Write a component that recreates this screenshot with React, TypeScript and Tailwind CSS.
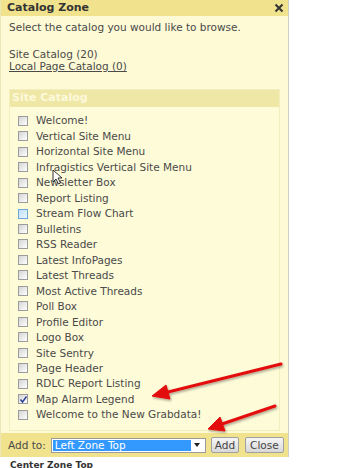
import React from "react";

const items = [
  "Welcome!",
  "Vertical Site Menu",
  "Horizontal Site Menu",
  "Infragistics Vertical Site Menu",
  "Newsletter Box",
  "Report Listing",
  "Stream Flow Chart",
  "Bulletins",
  "RSS Reader",
  "Latest InfoPages",
  "Latest Threads",
  "Most Active Threads",
  "Poll Box",
  "Profile Editor",
  "Logo Box",
  "Site Sentry",
  "Page Header",
  "RDLC Report Listing",
  "Map Alarm Legend",
  "Welcome to the New Grabdata!",
];

function Box({ hover, checked }: { hover?: boolean; checked?: boolean }) {
  return (
    <span
      className={
        "relative flex h-[10px] w-[10px] shrink-0 items-center justify-center border " +
        (hover
          ? "border-[#6fa8d8] bg-gradient-to-br from-[#bfe0f8] to-[#eaf6ff]"
          : "border-[#9c9c9c] bg-gradient-to-br from-[#d4d4d4] to-[#ffffff]")
      }
    >
      {checked && (
        <svg width="9" height="9" viewBox="0 0 9 9" className="absolute">
          <path d="M1.5 4.5 L3.5 7 L7.5 1.5" stroke="#2a3f8f" strokeWidth="1.4" fill="none" />
        </svg>
      )}
    </span>
  );
}

export default function App() {
  return (
    <div className="relative h-[468px] w-[361px] overflow-hidden bg-white text-[10.5px] text-[#4a4a4a]" style={{ fontFamily: '"DejaVu Sans", Verdana, sans-serif' }}>
      <div className="w-[289px] border-r border-l border-r-[#cfcfc4] border-l-[#ece6b8] bg-[#fefad6]">
        {/* title bar */}
        <div className="flex h-[16px] items-center justify-between bg-[#f1e38e] pl-[6px] pr-[4px]">
          <span className="text-[11px] font-bold text-[#333]">Catalog Zone</span>
          <svg width="10" height="10" viewBox="0 0 10 10">
            <path d="M1.5 1.5 L8.5 8.5 M8.5 1.5 L1.5 8.5" stroke="#333" strokeWidth="2" />
          </svg>
        </div>

        <div className="px-[8px] pt-[5px] pb-[2px]">
          <p className="leading-[13px]">Select the catalog you would like to browse.</p>
          <p className="mt-[14px] leading-[12px]">Site Catalog (20)</p>
          <p className="leading-[12px] underline">Local Page Catalog (0)</p>

          <div className="mt-[17px] border border-[#f3eebe] bg-[#fefbd8]">
            <div className="flex h-[17px] items-center bg-[#efe7a6] px-[2px] text-[11px] font-bold text-[#fdf9dc]">
              Site Catalog
            </div>
            <ul className="pt-[6px] pb-[8px] pl-[8px]">
              {items.map((it, i) => (
                <li key={it} className="flex h-[15.47px] items-center gap-[8px]">
                  <Box hover={i === 6} checked={i === 18} />
                  <span className="leading-none whitespace-nowrap">{it}</span>
                </li>
              ))}
            </ul>
          </div>
        </div>

        {/* footer */}
        <div className="flex h-[24px] items-center bg-[#f1e38e] pl-[7px] pr-[4px]">
          <span className="mr-[5px]">Add to:</span>
          <div className="flex h-[15px] w-[155px] items-center border border-[#9b9b9b] bg-white p-[1px]">
            <span className="flex h-full flex-1 items-center bg-[#3399ff] px-[2px] text-white">Left Zone Top</span>
            <span className="flex w-[13px] justify-center">
              <svg width="6" height="4" viewBox="0 0 6 4">
                <path d="M0 0 H6 L3 4 Z" fill="#222" />
              </svg>
            </span>
          </div>
          <button className="ml-[5px] h-[16px] rounded-[2px] border border-[#a0a0a0] bg-gradient-to-b from-[#f6f6f6] to-[#d8d8d8] px-[3px] leading-none text-[#444]">
            Add
          </button>
          <button className="ml-[6px] h-[16px] rounded-[2px] border border-[#a0a0a0] bg-gradient-to-b from-[#f6f6f6] to-[#d8d8d8] px-[4px] leading-none text-[#444]">
            Close
          </button>
        </div>
      </div>
      <p className="pt-[2px] pl-[10px] text-[9px] font-bold text-[#333]">Center Zone Top</p>

      {/* annotations */}
      <svg className="pointer-events-none absolute top-0 left-0" width="361" height="468">
        <defs>
          <filter id="sh" x="-10%" y="-10%" width="130%" height="130%">
            <feDropShadow dx="1" dy="1.5" stdDeviation="1" floodColor="#000" floodOpacity="0.35" />
          </filter>
        </defs>
        <g filter="url(#sh)" fill="#e31010" stroke="#e31010">
          <line x1="281" y1="364" x2="168" y2="392" strokeWidth="3" strokeLinecap="round" />
          <path d="M152 396 L166 385 L170 399 Z" strokeWidth="1" />
          <line x1="275" y1="406" x2="222" y2="424" strokeWidth="3" strokeLinecap="round" />
          <path d="M208 429 L220 417 L225 431 Z" strokeWidth="1" />
        </g>
        <path d="M53 170 L53 182 L56 179 L58.5 184 L60.5 183 L58 178 L62 178 Z" fill="#fff" stroke="#000" strokeWidth="0.8" />
      </svg>
    </div>
  );
}
